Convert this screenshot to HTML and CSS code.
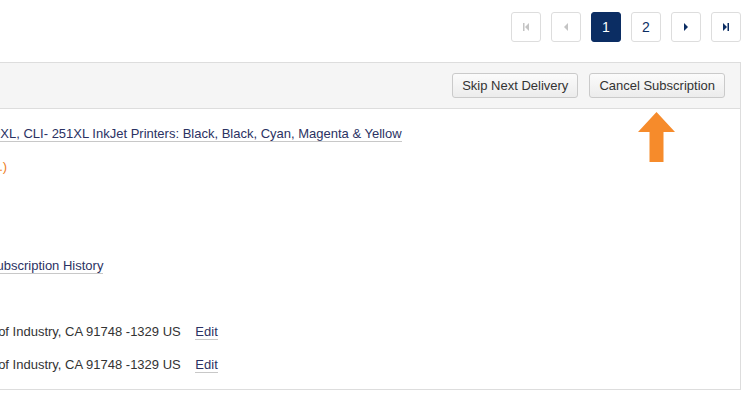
FILE: index.html
```html
<!DOCTYPE html>
<html lang="en">
<head>
    <meta charset="UTF-8">
    <meta name="viewport" content="width=device-width, initial-scale=1.0">
    <title>My Subscriptions</title>
    <link rel="stylesheet" href="styles.css">
</head>
<body>
    <div class="wrap">
        <!-- pagination -->
        <nav class="pager">
            <a class="pg disabled" href="#" aria-label="First">
                <svg width="6" height="8" viewBox="0 0 6 8"><rect x="0" y="0" width="1.5" height="8"/><polygon points="6,0 6,8 2,4"/></svg>
            </a>
            <a class="pg disabled" href="#" aria-label="Previous">
                <svg width="4" height="8" viewBox="0 0 4 8"><polygon points="4,0 4,8 0,4"/></svg>
            </a>
            <a class="pg active" href="#">1</a>
            <a class="pg" href="#">2</a>
            <a class="pg" href="#" aria-label="Next">
                <svg width="4" height="8" viewBox="0 0 4 8"><polygon points="0,0 0,8 4,4"/></svg>
            </a>
            <a class="pg" href="#" aria-label="Last">
                <svg width="6" height="8" viewBox="0 0 6 8"><polygon points="0,0 0,8 4,4"/><rect x="4.5" y="0" width="1.5" height="8"/></svg>
            </a>
        </nav>

        <div class="panel">
            <div class="panel-head">
                <button type="button" class="btn">Skip Next Delivery</button>
                <button type="button" class="btn">Cancel Subscription</button>
            </div>
            <div class="panel-body">
                <div class="row">
                    <span class="label">Item:</span>
                    <span class="value"><a class="link" href="#">Canon PGI-250XL, CLI- 251XL InkJet Printers: Black, Black, Cyan, Magenta &amp; Yellow</a></span>
                </div>
                <div class="row">
                    <span class="label">Price:</span>
                    <span class="value save">(You Save 10%.)</span>
                </div>
                <div class="row">
                    <span class="label">Frequency:</span>
                    <span class="value">Every 60 days</span>
                </div>
                <div class="row">
                    <span class="label">Next Order:</span>
                    <span class="value">May 12, 2016</span>
                </div>
                <div class="row">
                    <span class="label">History:</span>
                    <span class="value"><a class="link" href="#">View the Full Subscription History</a></span>
                </div>
                <div class="row">
                    <span class="label">Quantity:</span>
                    <span class="value">1</span>
                </div>
                <div class="row">
                    <span class="label">Ship To:</span>
                    <span class="value">9 Main St, City of Industry, CA 91748 -1329 US <a class="link edit" href="#">Edit</a></span>
                </div>
                <div class="row">
                    <span class="label">Bill To:</span>
                    <span class="value">9 Main St, City of Industry, CA 91748 -1329 US <a class="link edit" href="#">Edit</a></span>
                </div>
            </div>

            <!-- callout arrow -->
            <svg class="arrow" width="37" height="50" viewBox="0 0 37 50">
                <polygon points="18.5,0 37,20 25.5,20 25.5,50 11.5,50 11.5,20 0,20"/>
            </svg>
        </div>
    </div>
</body>
</html>
```

FILE: styles.css
```css
body {
    margin: 0;
    font-family: "Liberation Sans", Arial, sans-serif;
    font-size: 13px;
    color: #333;
    background-color: #fff;
    overflow: hidden;
}
.wrap {
    margin: 12px 12px 0 -200px;
}
.pager {
    display: flex;
    justify-content: flex-end;
    gap: 10px;
}
.pg {
    box-sizing: border-box;
    width: 30px;
    height: 30px;
    display: flex;
    align-items: center;
    justify-content: center;
    border: 1px solid #ddd;
    border-radius: 3px;
    color: #0b2d63;
    font-size: 14px;
    text-decoration: none;
    fill: #0b2d63;
}
.pg.disabled {
    fill: #c4c4c4;
}
.pg.active {
    background-color: #0b2d63;
    border-color: #0b2d63;
    color: #fff;
}
.panel {
    position: relative;
    margin-top: 20px;
    border: 1px solid #ddd;
}
.panel-head {
    display: flex;
    justify-content: flex-end;
    gap: 11px;
    padding: 10px 15px 10px 15px;
    background-color: #f5f5f5;
    border-bottom: 1px solid #ddd;
}
.btn {
    box-sizing: border-box;
    height: 25px;
    padding: 0 9px;
    font-family: "Liberation Sans", Arial, sans-serif;
    font-size: 13px;
    line-height: 23px;
    color: #333;
    background: linear-gradient(#fbfbfb, #ececec);
    border: 1px solid #cacaca;
    border-radius: 3px;
    cursor: pointer;
}
.panel-body {
    padding: 8px 0 8px 14px;
}
.row {
    display: grid;
    grid-template-columns: 95px 1fr;
    height: 33px;
    line-height: 33px;
    white-space: nowrap;
}
.label {
    font-weight: bold;
}
.link {
    color: #2b3263;
    text-decoration: none;
    border-bottom: 1px solid #c8c8c8;
}
.edit {
    margin-left: 11px;
}
.save {
    color: #ee7d22;
}
.arrow {
    position: absolute;
    top: 49px;
    right: 65px;
    fill: #f68b2b;
}
```
